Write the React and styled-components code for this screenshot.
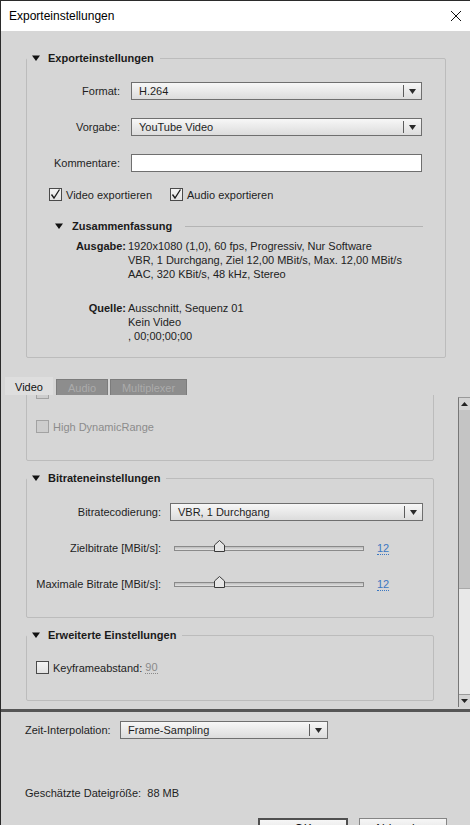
import React, { useLayoutEffect, useRef } from 'react'
import styled, { createGlobalStyle } from 'styled-components'

const GlobalStyle = createGlobalStyle`
  html, body {
    margin: 0;
    padding: 0;
    background: #d6d6d6;
  }
  body {
    font-family: "Liberation Sans", Arial, sans-serif;
    font-size: 11px;
    color: #1e1e1e;
  }
`

const Window = styled.div`
  width: 470px;
  height: 825px;
  box-sizing: border-box;
  border-left: 1px solid #2b2b2b;
  border-top: 1px solid #2b2b2b;
  background: #d6d6d6;
  display: flex;
  flex-direction: column;
  overflow: hidden;
`

const TitleBar = styled.div`
  flex: none;
  height: 30px;
  background: #fff;
  display: flex;
  align-items: center;
  justify-content: space-between;
  padding: 0 8px 0 8px;
  font-size: 12px;
  color: #000;
`

const TopPanel = styled.div`
  flex: none;
  padding: 19px 0 0 25px;
`

const Section = styled.fieldset`
  width: ${p => p.$w}px;
  box-sizing: border-box;
  margin: ${p => p.$mt || 0}px 0 0 0;
  padding: ${p => p.$pt || 0}px 0 ${p => p.$pb || 0}px 0;
  border: 1px solid #bcbcbc;
  border-radius: 2px;
  min-width: 0;
`

const Legend = styled.legend`
  padding: 0 6px 0 5px;
  margin: 0;
  line-height: 16px;
  font-weight: bold;
  color: #1a1a1a;
  display: flex;
  align-items: center;
  gap: 8px;
`

const Caret = () => (
  <svg width="8" height="6" viewBox="0 0 8 6">
    <path d="M0 0.5 H8 L4 6 Z" fill="#111" />
  </svg>
)

const FormRow = styled.div`
  display: flex;
  align-items: center;
  height: 18px;
  margin-top: ${p => p.$mt || 0}px;
`

const Label = styled.span`
  width: ${p => p.$w}px;
  flex: none;
  text-align: ${p => p.$align || 'right'};
  margin-right: ${p => p.$gap}px;
  white-space: nowrap;
`

const SelectBox = styled.div`
  width: ${p => p.$w}px;
  height: 18px;
  box-sizing: border-box;
  border: 1px solid #6f6f6f;
  background: linear-gradient(#f7f7f7, #dcdcdc);
  display: flex;
  align-items: center;
`

const SelectText = styled.span`
  flex: 1;
  padding-left: 7px;
  white-space: nowrap;
`

const SelectArrow = styled.span`
  width: 17px;
  height: 12px;
  border-left: 1px solid #5c5c5c;
  display: flex;
  align-items: center;
  justify-content: center;
`

const Select = ({ w, value }) => (
  <SelectBox $w={w}>
    <SelectText>{value}</SelectText>
    <SelectArrow>
      <svg width="7" height="5" viewBox="0 0 7 5">
        <path d="M0 0 H7 L3.5 5 Z" fill="#2a2a2a" />
      </svg>
    </SelectArrow>
  </SelectBox>
)

const TextInput = styled.div`
  width: ${p => p.$w}px;
  height: 18px;
  box-sizing: border-box;
  border: 1px solid #6f6f6f;
  background: #fff;
`

const CheckRow = styled.div`
  display: flex;
  align-items: center;
  gap: ${p => p.$gap ?? 18}px;
  padding-left: ${p => p.$pl}px;
  margin-top: ${p => p.$mt || 0}px;
  height: 13px;
`

const CheckLabel = styled.label`
  display: flex;
  align-items: center;
  gap: 4px;
  color: ${p => (p.$disabled ? '#8c8c8c' : '#1e1e1e')};
  white-space: nowrap;
`

const Box = styled.span`
  width: 13px;
  height: 13px;
  box-sizing: border-box;
  border: 1px solid ${p => (p.$disabled ? '#a2a2a2' : '#4a4a4a')};
  background: ${p => (p.$disabled ? '#cdcdcd' : 'linear-gradient(#f4f4f4, #e2e2e2)')};
  display: flex;
  align-items: center;
  justify-content: center;
  flex: none;
`

const Checkbox = ({ checked, disabled, children }) => (
  <CheckLabel $disabled={disabled}>
    <Box $disabled={disabled}>
      {checked && (
        <svg width="11" height="11" viewBox="0 0 11 11">
          <path d="M1.5 5.5 L4 9 L9.5 0.5" fill="none" stroke="#1a1a1a" strokeWidth="1.3" />
        </svg>
      )}
    </Box>
    {children}
  </CheckLabel>
)

const SubHeader = styled.div`
  display: flex;
  align-items: center;
  gap: 9px;
  padding-left: 28px;
  margin-top: 18px;
  line-height: 14px;
  font-weight: bold;
  color: #1a1a1a;

  &::after {
    content: '';
    flex: 1;
    height: 1px;
    background: #b4b4b4;
    margin: 0 22px 0 4px;
  }
`

const Summary = styled.div`
  display: grid;
  grid-template-columns: 99px 1fr;
  column-gap: 2px;
  row-gap: 20px;
  line-height: 14px;
  margin-top: 6px;
`

const SumLabel = styled.span`
  text-align: right;
  font-weight: bold;
  color: #1a1a1a;
`

const SumValue = styled.span`
  white-space: pre;
  color: #222;
`

const TabBar = styled.div`
  flex: none;
  display: flex;
  align-items: flex-end;
  padding-left: 4px;
  margin-top: 19px;
  height: 18px;
`

const Tab = styled.div`
  width: ${p => p.$w}px;
  margin-right: ${p => p.$mr || 0}px;
  box-sizing: border-box;
  height: ${p => (p.$active ? 18 : 16)}px;
  display: flex;
  align-items: center;
  justify-content: center;
  background: ${p => (p.$active ? '#dedede' : '#8d8d8d')};
  border: 1px solid ${p => (p.$active ? '#dedede' : '#7c7c7c')};
  border-bottom: none;
  color: ${p => (p.$active ? '#111' : '#ababab')};
`

const ScrollPanel = styled.div`
  flex: none;
  height: 314px;
  display: flex;
`

const ScrollContent = styled.div`
  position: relative;
  flex: 1;
  overflow: hidden;
  padding-left: 25px;
`

const ScrollInner = styled.div`
  padding-bottom: 120px;
`

const Scrollbar = styled.div`
  width: 12px;
  margin: 2px 0 2px 0;
  box-sizing: border-box;
  border-left: 1px solid #777;
  border-top: 1px solid #999;
  display: flex;
  flex-direction: column;
  background: #e8e8e8;
`

const ScrollButton = styled.div`
  height: 12px;
  flex: none;
  display: flex;
  align-items: center;
  justify-content: center;
  background: #d4d4d4;
  border-top: ${p => (p.$down ? '1px solid #9a9a9a' : 'none')};
`

const Thumb = styled.div`
  height: 178px;
  flex: none;
  background: #c4c4c4;
  border-bottom: 1px solid #a9a9a9;
`

const Track = styled.div`
  flex: 1;
`

const SliderRow = styled.div`
  display: flex;
  align-items: center;
  height: 18px;
  margin-top: ${p => p.$mt || 0}px;
`

const SliderTrack = styled.div`
  position: relative;
  width: 190px;
  height: 5px;
  box-sizing: border-box;
  border: 1px solid #8a8a8a;
  background: linear-gradient(#bdbdbd, #e4e4e4);
  margin-right: 13px;
`

const Knob = styled.svg`
  position: absolute;
  left: ${p => p.$x}px;
  top: -7px;
`

const Value = styled.span`
  color: #3c78c2;
  border-bottom: 1px dotted #3c78c2;
  line-height: 12px;
`

const GrayValue = styled.span`
  color: #8a8a8a;
  border-bottom: 1px dotted #8a8a8a;
  line-height: 12px;
`

const Separator = styled.div`
  flex: none;
  height: 3px;
  background: #565656;
`

const BottomPanel = styled.div`
  flex: 1;
  display: flex;
  flex-direction: column;
  padding: 9px 0 0 24px;
`

const SizeText = styled.div`
  margin-top: 47px;
  line-height: 14px;
`

const ButtonRow = styled.div`
  display: flex;
  justify-content: flex-end;
  gap: 11px;
  padding-right: 23px;
  margin-top: 18px;
`

const Button = styled.div`
  width: ${p => p.$w}px;
  height: 22px;
  box-sizing: border-box;
  border: ${p => (p.$default ? '2px solid #4f4f4f' : '1px solid #858585')};
  background: linear-gradient(#f6f6f6, #dcdcdc);
  display: flex;
  align-items: center;
  justify-content: center;
  font-size: 12px;
  color: #111;
`

const Slider = ({ label, mt }) => (
  <SliderRow $mt={mt}>
    <Label $w={134} $gap={13}>{label}</Label>
    <SliderTrack>
      <Knob $x={39} width="11" height="12" viewBox="0 0 11 12">
        <path d="M0.5 11.5 V5 L5.5 0.5 L10.5 5 V11.5 Z" fill="#e6e6e6" stroke="#3a3a3a" />
      </Knob>
    </SliderTrack>
    <Value>12</Value>
  </SliderRow>
)

export default function App() {
  const scrollRef = useRef(null)
  const hdrRef = useRef(null)

  useLayoutEffect(() => {
    const s = scrollRef.current
    const h = hdrRef.current
    if (s && h) {
      const delta = h.getBoundingClientRect().top - s.getBoundingClientRect().top
      s.scrollTop += delta - 25
    }
  }, [])

  return (
    <>
      <GlobalStyle />
      <Window>
        <TitleBar>
          <span>Exporteinstellungen</span>
          <svg width="12" height="12" viewBox="0 0 12 12">
            <path d="M1 1 L11 11 M11 1 L1 11" stroke="#111" strokeWidth="1" />
          </svg>
        </TitleBar>

        <TopPanel>
          <Section $w={420} $pt={16} $pb={14}>
            <Legend><Caret />Exporteinstellungen</Legend>
            <FormRow>
              <Label $w={93} $gap={11}>Format:</Label>
              <Select w={291} value="H.264" />
            </FormRow>
            <FormRow $mt={18}>
              <Label $w={93} $gap={11}>Vorgabe:</Label>
              <Select w={291} value="YouTube Video" />
            </FormRow>
            <FormRow $mt={18}>
              <Label $w={93} $gap={11}>Kommentare:</Label>
              <TextInput $w={291} />
            </FormRow>
            <CheckRow $pl={22} $mt={16}>
              <Checkbox checked>Video exportieren</Checkbox>
              <Checkbox checked>Audio exportieren</Checkbox>
            </CheckRow>
            <SubHeader><Caret />Zusammenfassung</SubHeader>
            <Summary>
              <SumLabel>Ausgabe:</SumLabel>
              <SumValue>{'1920x1080 (1,0), 60 fps, Progressiv, Nur Software\nVBR, 1 Durchgang, Ziel 12,00 MBit/s, Max. 12,00 MBit/s\nAAC, 320 KBit/s, 48 kHz, Stereo'}</SumValue>
              <SumLabel>Quelle:</SumLabel>
              <SumValue>{'Ausschnitt, Sequenz 01\nKein Video\n, 00;00;00;00'}</SumValue>
            </Summary>
          </Section>
        </TopPanel>

        <TabBar>
          <Tab $w={48} $mr={3} $active>Video</Tab>
          <Tab $w={52} $mr={2}>Audio</Tab>
          <Tab $w={77}>Multiplexer</Tab>
        </TabBar>

        <ScrollPanel>
          <ScrollContent ref={scrollRef}>
            <ScrollInner>
              <Section $w={408} $pt={40} $pb={27}>
                <CheckRow $pl={9}>
                  <Checkbox disabled />
                </CheckRow>
                <CheckRow $pl={9} $mt={21} ref={hdrRef}>
                  <Checkbox disabled>High DynamicRange</Checkbox>
                </CheckRow>
              </Section>
              <Section $w={408} $mt={9} $pt={17} $pb={24}>
                <Legend><Caret />Bitrateneinstellungen</Legend>
                <FormRow>
                  <Label $w={134} $gap={9}>Bitratecodierung:</Label>
                  <Select w={253} value="VBR, 1 Durchgang" />
                </FormRow>
                <Slider label="Zielbitrate [MBit/s]:" mt={18} />
                <Slider label="Maximale Bitrate [MBit/s]:" mt={18} />
              </Section>
              <Section $w={408} $mt={9} $pt={18} $pb={26}>
                <Legend><Caret />Erweiterte Einstellungen</Legend>
                <CheckRow $pl={9} $gap={3}>
                  <Checkbox>Keyframeabstand:</Checkbox>
                  <GrayValue>90</GrayValue>
                </CheckRow>
              </Section>
            </ScrollInner>
          </ScrollContent>
          <Scrollbar>
            <ScrollButton>
              <svg width="7" height="4" viewBox="0 0 7 4"><path d="M0 4 H7 L3.5 0 Z" fill="#222" /></svg>
            </ScrollButton>
            <Thumb />
            <Track />
            <ScrollButton $down>
              <svg width="7" height="4" viewBox="0 0 7 4"><path d="M0 0 H7 L3.5 4 Z" fill="#222" /></svg>
            </ScrollButton>
          </Scrollbar>
        </ScrollPanel>

        <Separator />

        <BottomPanel>
          <FormRow>
            <Label $w={88} $gap={7} $align="left">Zeit-Interpolation:</Label>
            <Select w={208} value="Frame-Sampling" />
          </FormRow>
          <SizeText>Geschätzte Dateigröße:&nbsp; 88 MB</SizeText>
          <ButtonRow>
            <Button $w={90} $default>OK</Button>
            <Button $w={88}>Abbrechen</Button>
          </ButtonRow>
        </BottomPanel>
      </Window>
    </>
  )
}
